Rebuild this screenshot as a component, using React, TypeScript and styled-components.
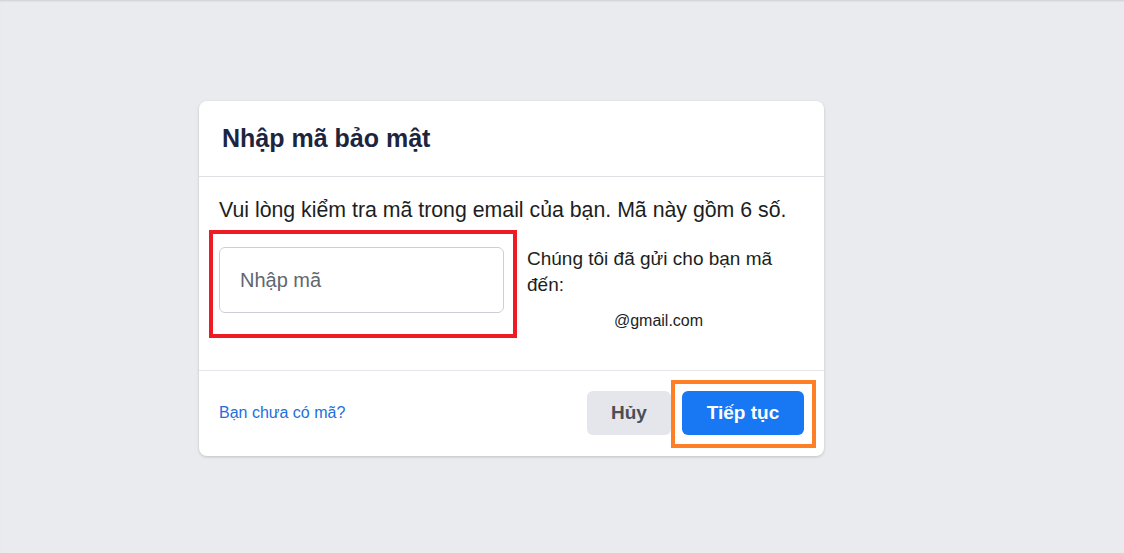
import React from 'react'
import styled, { createGlobalStyle } from 'styled-components'

const GlobalStyle = createGlobalStyle`
  html, body {
    margin: 0;
    padding: 0;
    background: #e9ebee;
  }
  * { box-sizing: border-box; }
`

const Page = styled.div`
  min-height: 553px;
  background: #e9ebee;
  box-shadow: inset 0 2px 2px -1px rgba(0, 0, 0, 0.12);
  padding: 101px 0 0 199px;
  font-family: 'Liberation Sans', Arial, sans-serif;
`

const Card = styled.div`
  width: 625px;
  background: #fff;
  border-radius: 8px;
  box-shadow: 0 1px 3px rgba(0, 0, 0, 0.18);
`

const Header = styled.div`
  height: 76px;
  display: flex;
  align-items: center;
  padding: 0 23px;
  border-bottom: 1px solid #dddfe2;
`

const Title = styled.h2`
  margin: 0;
  font-size: 25px;
  font-weight: 700;
  color: #1c2540;
`

const Body = styled.div`
  padding: 20px 20px 32px;
  border-bottom: 1px solid #e4e6eb;
`

const Lead = styled.p`
  margin: 0 0 7px;
  font-size: 21.3px;
  line-height: 26px;
  color: #1c1e21;
  white-space: nowrap;
`

const Row = styled.div`
  display: flex;
  align-items: flex-start;
`

const Highlight = styled.div<{ $color: string }>`
  border: 4px solid ${p => p.$color};
`

const InputFrame = styled(Highlight)`
  flex: none;
  margin-left: -10px;
  width: 308px;
  padding: 13px 9px 21px 6px;
`

const CodeInput = styled.input`
  display: block;
  width: 285px;
  height: 66px;
  border: 1px solid #ccd0d5;
  border-radius: 6px;
  padding: 0 20px;
  font-family: inherit;
  font-size: 20px;
  color: #1c1e21;
  outline: none;
  &::placeholder { color: #606770; }
`

const Info = styled.div`
  flex: 1;
  padding: 16px 0 0 10px;
  font-size: 19px;
  line-height: 26px;
  color: #1c1e21;
`

const Email = styled.div`
  margin-top: 10px;
  padding-right: 14px;
  text-align: center;
  font-size: 16px;
`

const Footer = styled.div`
  display: flex;
  align-items: center;
  justify-content: space-between;
  padding: 19px 20px 20px;
`

const Link = styled.a`
  font-size: 16px;
  color: #216fdb;
  text-decoration: none;
  cursor: pointer;
`

const Actions = styled.div`
  display: flex;
  align-items: center;
`

const Button = styled.button<{ $primary?: boolean }>`
  height: 44px;
  border: none;
  border-radius: 6px;
  font-family: inherit;
  font-size: 19px;
  font-weight: 700;
  white-space: nowrap;
  cursor: pointer;
  padding: 0;
  width: ${p => (p.$primary ? '122px' : '84px')};
  background: ${p => (p.$primary ? '#1877f2' : '#e4e6eb')};
  color: ${p => (p.$primary ? '#fff' : '#4b4f56')};
`

const ButtonFrame = styled(Highlight)`
  margin: -10px -12px -12px 0;
  padding: 7px 8px 9px 7px;
`

export default function App() {
  return (
    <>
      <GlobalStyle />
      <Page>
        <Card>
          <Header>
            <Title>Nhập mã bảo mật</Title>
          </Header>
          <Body>
            <Lead>Vui lòng kiểm tra mã trong email của bạn. Mã này gồm 6 số.</Lead>
            <Row>
              <InputFrame $color="#ed1c24">
                <CodeInput placeholder="Nhập mã" />
              </InputFrame>
              <Info>
                Chúng tôi đã gửi cho bạn mã đến:
                <Email>@gmail.com</Email>
              </Info>
            </Row>
          </Body>
          <Footer>
            <Link>Bạn chưa có mã?</Link>
            <Actions>
              <Button>Hủy</Button>
              <ButtonFrame $color="#ff7f27">
                <Button $primary>Tiếp tục</Button>
              </ButtonFrame>
            </Actions>
          </Footer>
        </Card>
      </Page>
    </>
  )
}
